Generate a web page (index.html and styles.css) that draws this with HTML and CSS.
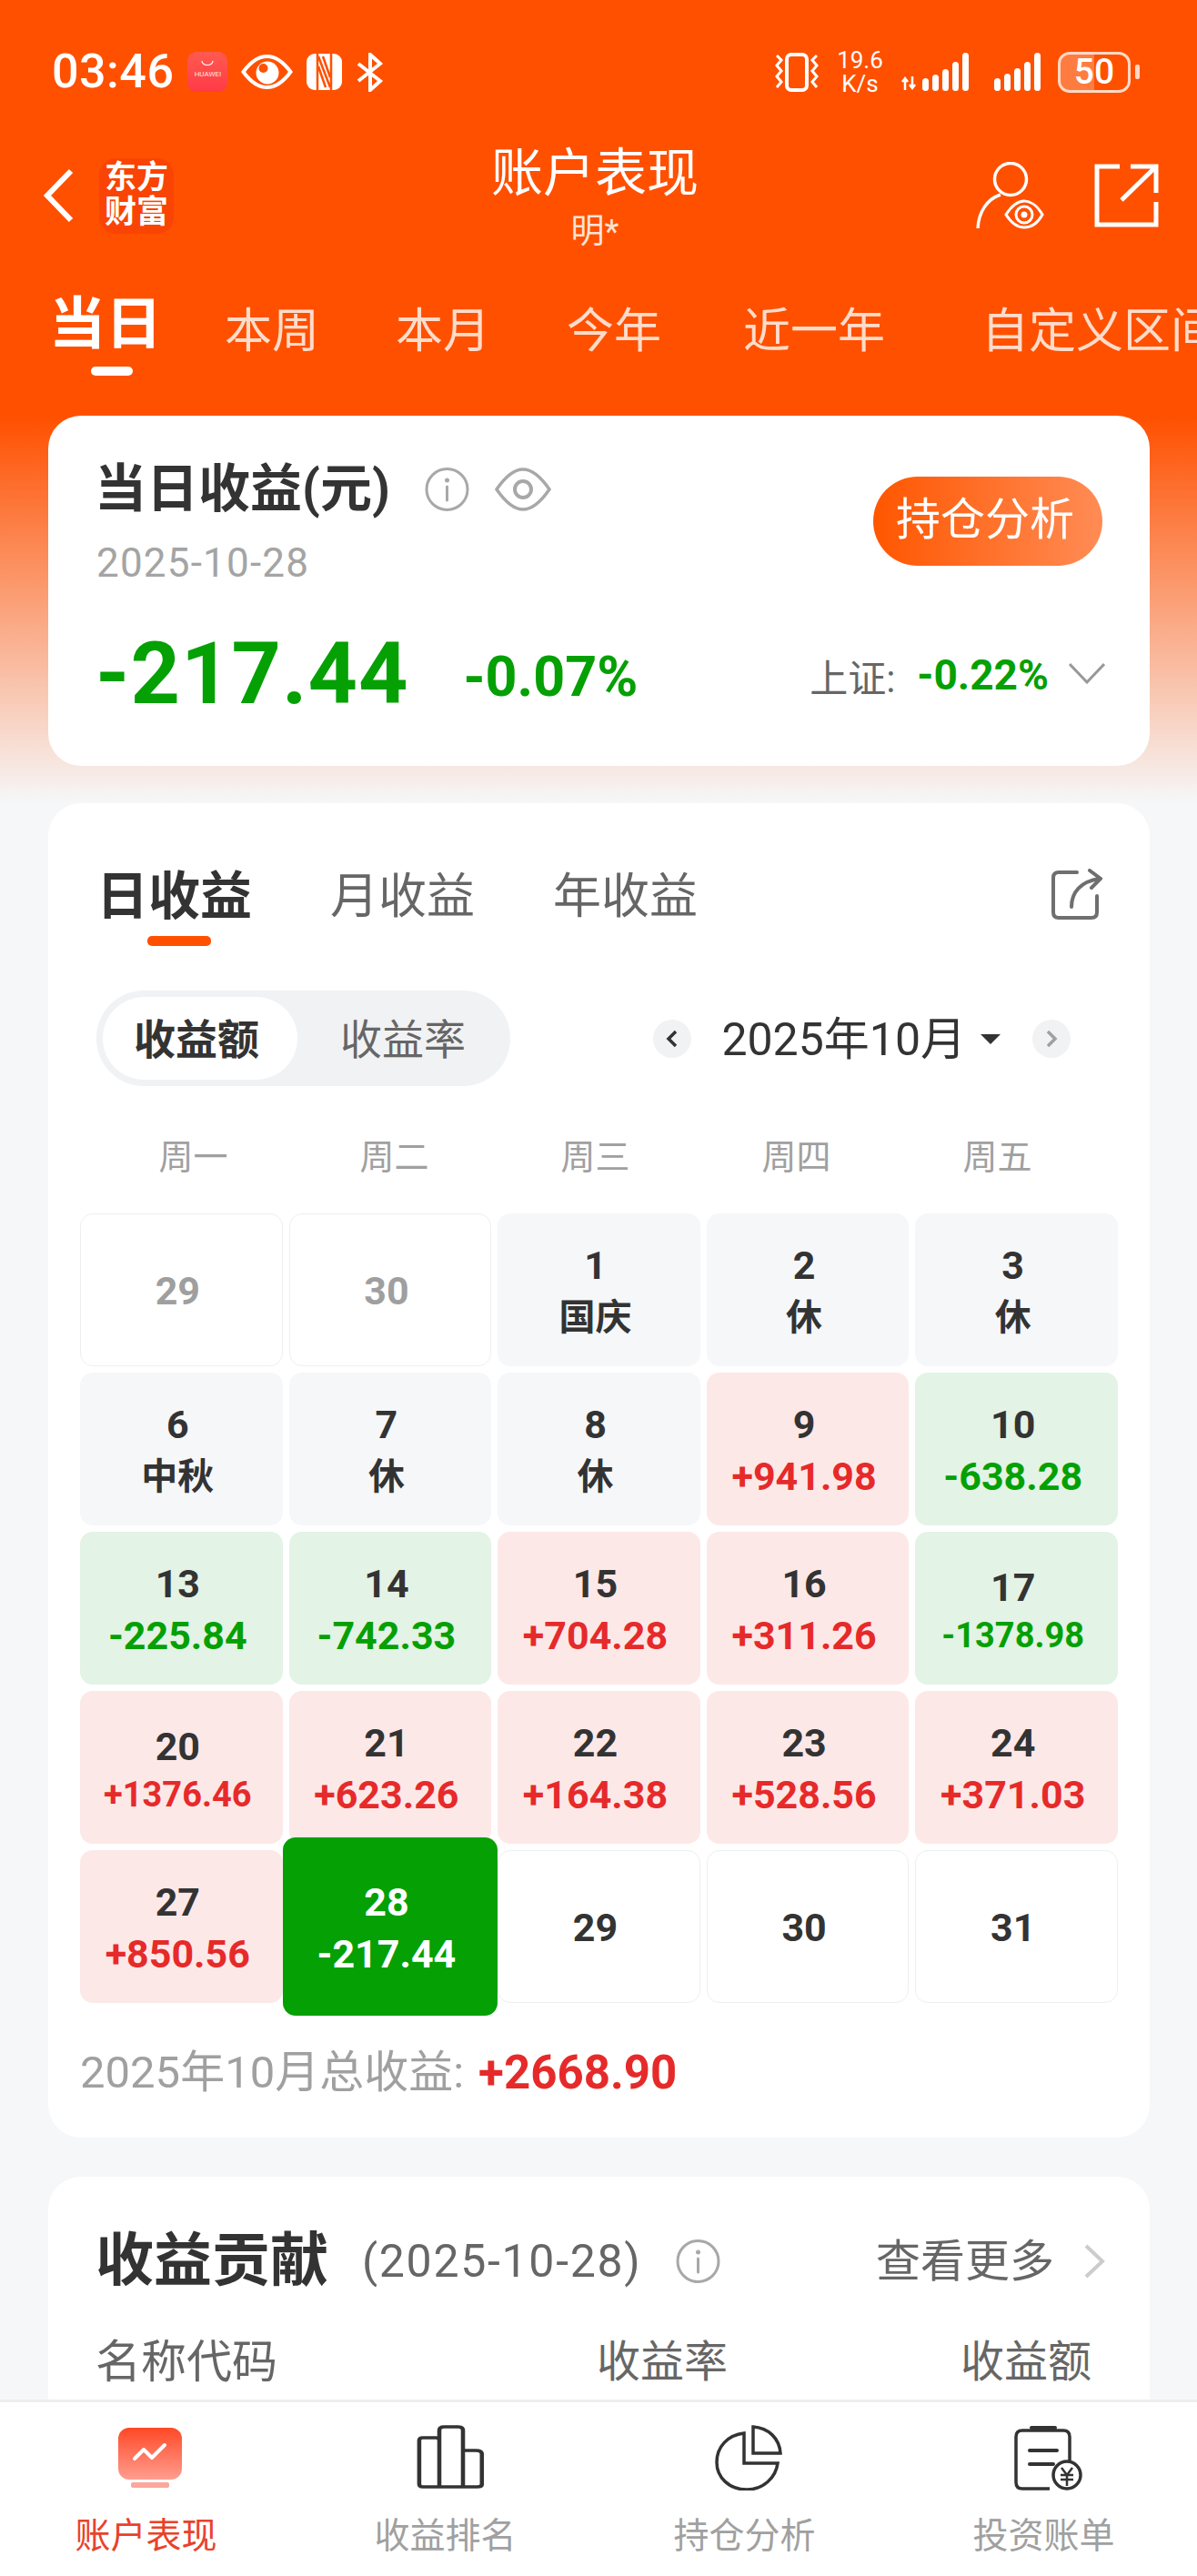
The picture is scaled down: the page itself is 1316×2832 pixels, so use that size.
FILE: index.html
```html
<!DOCTYPE html>
<html lang="zh-CN">
	<head>
		<meta charset="utf-8">
		<meta name="viewport" content="width=device-width, initial-scale=1">
		<title>账户表现</title>
		<link rel="stylesheet" href="styles.css">
	</head>
	<body>
		<!-- top orange area -->
		<div class="top">
			<div class="status-bar">
				<div class="status-left">
					<span class="status-time">03:46</span>
					<div class="huawei-icon">
						<svg class="huawei-smile" viewBox="0 0 16 8"><path d="M1 1c1 7 13 7 14 0" fill="none" stroke="#fff" stroke-width="1.2"/></svg>
						<span class="huawei-text">HUAWEI</span>
					</div>
					<svg class="st-eye" viewBox="0 0 57 38"><path d="M2.5 19C12 6 20 2 28.500 2S45 6 54.500 19C45 32 37 36 28.500 36S12 32 2.500 19Z" fill="none" stroke="#fff" stroke-width="4"/><circle cx="29" cy="20" r="12.500" fill="#fff"/><circle cx="24.500" cy="15" r="5" fill="#ff5000"/></svg>
					<svg class="st-nfc" viewBox="0 0 39 40"><rect width="39" height="40" rx="9" fill="#fff"/><path d="M12 0V40M27 0V40M13 3L26 37M13 14L21 37M26 26L18 3" fill="none" stroke="#ff5000" stroke-width="2.500"/></svg>
					<svg class="st-bt" viewBox="0 0 31 43"><path d="M3 12L27 31L16 41V2L27 12L3 31" fill="none" stroke="#fff" stroke-width="4"/></svg>
				</div>
				<div class="status-right">
					<svg class="st-vibrate" viewBox="0 0 50 43"><rect x="14" y="2" width="22" height="39" rx="5" fill="none" stroke="#fff" stroke-width="4"/><path d="M3 3L8 8L3 14L8 20L3 26L8 32L3 38M47 3L42 8L47 14L42 20L47 26L42 32L47 38" fill="none" stroke="#fff" stroke-width="3"/></svg>
					<div class="st-speed"><span>19.6</span><span>K/s</span></div>
					<svg class="st-signal" viewBox="0 0 76 42"><path d="M5 41V28M2 32L5 28L8 32M13 26V39M10 35L13 39L16 35" fill="none" stroke="#fff" stroke-width="2.500"/><rect x="24" y="28" width="7" height="14" rx="3.500" fill="#fff"/><rect x="35" y="24" width="7" height="18" rx="3.500" fill="#fff"/><rect x="46" y="18" width="7" height="24" rx="3.500" fill="#fff"/><rect x="57" y="10" width="7" height="32" rx="3.500" fill="#fff"/><rect x="68" y="0" width="7" height="42" rx="3.500" fill="#fff"/></svg>
					<svg class="st-signal2" viewBox="0 0 52 42"><rect x="0" y="28" width="7" height="14" rx="3.500" fill="#fff"/><rect x="11" y="23" width="7" height="19" rx="3.500" fill="#fff"/><rect x="22" y="17" width="7" height="25" rx="3.500" fill="#fff"/><rect x="33" y="10" width="7" height="32" rx="3.500" fill="#fff"/><rect x="44" y="0" width="7" height="42" rx="3.500" fill="#fff"/></svg>
					<div class="battery">
						<div class="battery-body"><div class="battery-fill"></div><span class="battery-text">50</span></div>
						<div class="battery-tip"></div>
					</div>
				</div>
			</div>

			<div class="nav">
				<div class="nav-left">
					<svg class="nav-back" viewBox="0 0 33 60"><path d="M30 3L4 30L30 57" fill="none" stroke="#fff" stroke-width="6"/></svg>
					<div class="nav-logo"><span>东方</span><span>财富</span></div>
				</div>
				<div class="nav-title">
					<div class="nav-title-main">账户表现</div>
					<div class="nav-title-sub">明*</div>
				</div>
				<div class="nav-right">
					<svg class="nav-user" viewBox="0 0 75 74"><circle cx="38" cy="19" r="17.500" fill="none" stroke="#fff" stroke-width="3.500"/><path d="M27 36C12 41 3 55 2 73" fill="none" stroke="#fff" stroke-width="3.500"/><path d="M33 58C40 47 47 43 53 43S67 47 73 58C67 69 60 72 53 72S40 69 33 58Z" fill="none" stroke="#fff" stroke-width="3"/><circle cx="53" cy="58" r="9" fill="none" stroke="#fff" stroke-width="3"/><circle cx="53" cy="58" r="3.500" fill="#fff"/></svg>
					<svg class="nav-share" viewBox="0 0 71 70"><path d="M28 3H3V67H68V42" fill="none" stroke="#fff" stroke-width="5"/><path d="M30 40L67 4M40 3H68V32" fill="none" stroke="#fff" stroke-width="5"/></svg>
				</div>
			</div>

			<div class="tabs">
				<div class="tab tab-active">当日</div>
				<div class="tab">本周</div>
				<div class="tab">本月</div>
				<div class="tab">今年</div>
				<div class="tab tab-year">近一年</div>
				<div class="tab tab-custom">自定义区间</div>
			</div>

			<!-- summary card -->
			<div class="card card-summary">
				<div class="summary-head">
					<div>
						<div class="summary-title-row">
							<span class="summary-title">当日收益(元)</span>
							<svg class="icon-info" viewBox="0 0 49 48"><circle cx="24.500" cy="24" r="22.500" fill="none" stroke="#a8a8a8" stroke-width="3"/><circle cx="24.500" cy="14" r="2.500" fill="#a8a8a8"/><path d="M24.500 21V36" stroke="#a8a8a8" stroke-width="3" stroke-linecap="round"/></svg>
							<svg class="icon-eye" viewBox="0 0 62 48"><path d="M2 24C13 8 22 2 31 2S49 8 60 24C49 40 40 46 31 46S13 40 2 24Z" fill="none" stroke="#a8a8a8" stroke-width="3.500"/><circle cx="31" cy="24" r="9" fill="none" stroke="#a8a8a8" stroke-width="4"/></svg>
						</div>
						<div class="summary-date">2025-10-28</div>
					</div>
					<div class="summary-btn">持仓分析</div>
				</div>
				<div class="summary-values">
					<span class="summary-amount">-217.44</span>
					<span class="summary-pct">-0.07%</span>
					<div class="summary-index">
						<span class="summary-index-name">上证:</span>
						<span class="summary-index-val">-0.22%</span>
						<svg class="icon-down" viewBox="0 0 40 24"><path d="M1 2L20 22L39 2" fill="none" stroke="#999" stroke-width="3"/></svg>
					</div>
				</div>
			</div>
		</div>
		<!-- .top orange area -->

		<!-- calendar card -->
		<div class="card card-calendar">
			<div class="cal-tabs">
				<div class="cal-tab cal-tab-active">日收益</div>
				<div class="cal-tab">月收益</div>
				<div class="cal-tab">年收益</div>
				<svg class="cal-share" viewBox="0 0 56 56"><path d="M28 4H8Q2 4 2 10V48Q2 54 8 54H44Q50 54 50 48V30" fill="none" stroke="#6f6f6f" stroke-width="4" stroke-linecap="round"/><path d="M22 42C22 26 32 14 53 11M42 2L54 11L44 21" fill="none" stroke="#6f6f6f" stroke-width="4" stroke-linecap="round"/></svg>
			</div>

			<div class="cal-controls">
				<div class="segment">
					<div class="segment-item segment-active">收益额</div>
					<div class="segment-item">收益率</div>
				</div>
				<div class="month-picker">
					<div class="month-arrow"><svg viewBox="0 0 42 42"><path d="M25 13L17 21L25 29" fill="none" stroke="#333" stroke-width="3.500"/></svg></div>
					<span class="month-text">2025年10月</span>
					<span class="month-caret"></span>
					<div class="month-arrow"><svg viewBox="0 0 42 42"><path d="M17 13L25 21L17 29" fill="none" stroke="#a0a0a0" stroke-width="3.500"/></svg></div>
				</div>
			</div>

			<div class="weekdays">
				<div>周一</div>
				<div>周二</div>
				<div>周三</div>
				<div>周四</div>
				<div>周五</div>
			</div>

			<div class="cal-grid">
				<div class="day day-out"><div class="day-num">29</div></div>
				<div class="day day-out"><div class="day-num">30</div></div>
				<div class="day day-off"><div class="day-num">1</div><div class="day-note">国庆</div></div>
				<div class="day day-off"><div class="day-num">2</div><div class="day-note">休</div></div>
				<div class="day day-off"><div class="day-num">3</div><div class="day-note">休</div></div>

				<div class="day day-off"><div class="day-num">6</div><div class="day-note">中秋</div></div>
				<div class="day day-off"><div class="day-num">7</div><div class="day-note">休</div></div>
				<div class="day day-off"><div class="day-num">8</div><div class="day-note">休</div></div>
				<div class="day day-up"><div class="day-num">9</div><div class="day-val">+941.98</div></div>
				<div class="day day-down"><div class="day-num">10</div><div class="day-val">-638.28</div></div>

				<div class="day day-down"><div class="day-num">13</div><div class="day-val">-225.84</div></div>
				<div class="day day-down"><div class="day-num">14</div><div class="day-val">-742.33</div></div>
				<div class="day day-up"><div class="day-num">15</div><div class="day-val">+704.28</div></div>
				<div class="day day-up"><div class="day-num">16</div><div class="day-val">+311.26</div></div>
				<div class="day day-down"><div class="day-num">17</div><div class="day-val day-val-long">-1378.98</div></div>

				<div class="day day-up"><div class="day-num">20</div><div class="day-val day-val-long">+1376.46</div></div>
				<div class="day day-up"><div class="day-num">21</div><div class="day-val">+623.26</div></div>
				<div class="day day-up"><div class="day-num">22</div><div class="day-val">+164.38</div></div>
				<div class="day day-up"><div class="day-num">23</div><div class="day-val">+528.56</div></div>
				<div class="day day-up"><div class="day-num">24</div><div class="day-val">+371.03</div></div>

				<div class="day day-up"><div class="day-num">27</div><div class="day-val">+850.56</div></div>
				<div class="day day-today"><div class="day-num">28</div><div class="day-val">-217.44</div></div>
				<div class="day day-future"><div class="day-num">29</div></div>
				<div class="day day-future"><div class="day-num">30</div></div>
				<div class="day day-future"><div class="day-num">31</div></div>
			</div>

			<div class="cal-total">
				<span class="cal-total-label">2025年10月总收益:</span>
				<span class="cal-total-val">+2668.90</span>
			</div>
		</div>
		<!-- .calendar card -->

		<!-- contribution card -->
		<div class="card card-contrib">
			<div class="contrib-head">
				<span class="contrib-title">收益贡献</span>
				<span class="contrib-date">(2025-10-28)</span>
				<svg class="icon-info" viewBox="0 0 49 48"><circle cx="24.500" cy="24" r="22.500" fill="none" stroke="#a8a8a8" stroke-width="3"/><circle cx="24.500" cy="14" r="2.500" fill="#a8a8a8"/><path d="M24.500 21V36" stroke="#a8a8a8" stroke-width="3" stroke-linecap="round"/></svg>
				<span class="contrib-more">查看更多</span>
				<svg class="icon-right" viewBox="0 0 23 38"><path d="M2 2L20 19L2 36" fill="none" stroke="#ccc" stroke-width="4"/></svg>
			</div>
			<div class="contrib-cols">
				<span class="contrib-col-name">名称代码</span>
				<span>收益率</span>
				<span class="contrib-col-amt">收益额</span>
			</div>
		</div>

		<!-- bottom bar -->
		<div class="bottom-bar">
			<div class="bottom-item bottom-active">
				<svg class="bottom-icon" viewBox="0 0 76 72">
					<defs><linearGradient id="tabRed" x1="0" y1="0" x2="0" y2="1"><stop offset="0" stop-color="#ff4826"/><stop offset="1" stop-color="#ff9e90"/></linearGradient></defs>
					<rect x="3" y="3" width="70" height="57" rx="12" fill="url(#tabRed)"/>
					<rect x="17" y="63" width="42" height="6" rx="2" fill="#fba79c"/>
					<path d="M21 37L31 27L40 36L54 22" fill="none" stroke="#fff" stroke-width="4" stroke-linecap="round" stroke-linejoin="round"/>
				</svg>
				<span>账户表现</span>
			</div>
			<div class="bottom-item">
				<svg class="bottom-icon" viewBox="0 0 76 72"><path d="M3 17Q3 14 6 14H17Q20 14 20 17V68H6Q3 68 3 65ZM20 6Q20 2 24 2H36Q40 2 40 6V68H20ZM40 28H51Q56 28 56 32V65Q56 68 52 68H40Z" transform="translate(1 0) scale(1.300 1)" fill="none" stroke="#333" stroke-width="3.500"/></svg>
				<span>收益排名</span>
			</div>
			<div class="bottom-item">
				<svg class="bottom-icon" viewBox="0 0 76 72"><path d="M33 9C15 11 3 24 3 41C3 58 17 71 36 71C54 71 68 58 70 42H33Z" fill="none" stroke="#333" stroke-width="3.500"/><path d="M43 2V31H73C72 15 60 3 43 2Z" fill="none" stroke="#333" stroke-width="3.500"/></svg>
				<span>持仓分析</span>
			</div>
			<div class="bottom-item">
				<svg class="bottom-icon" viewBox="0 0 76 72"><path d="M40 70H10Q3 70 3 63V13Q3 6 10 6H55Q62 6 62 13V42" fill="none" stroke="#333" stroke-width="3.500"/><path d="M20 3H46" stroke="#333" stroke-width="4" stroke-linecap="round"/><path d="M18 28H48M18 43H44" stroke="#333" stroke-width="4" stroke-linecap="round"/><circle cx="59" cy="55" r="15" fill="#fff" stroke="#333" stroke-width="3.500"/><path d="M53 47L59 55L65 47M52 55H66M52 60H66M59 55V67" fill="none" stroke="#333" stroke-width="2.500"/></svg>
				<span>投资账单</span>
			</div>
		</div>
		<!-- .bottom bar -->
	</body>
</html>
```

FILE: styles.css
```css
html, body {
	margin: 0;
	padding: 0;
}
body {
	position: relative;
	width: 1316px;
	height: 2832px;
	overflow: hidden;
	background-color: #f6f7f9;
	color: #333;
	font-family: "Roboto", "Noto Sans CJK SC", sans-serif;
}
svg {
	display: block;
	flex: none;
}

/* top */
.top {
	height: 883px;
	box-sizing: border-box;
	overflow: hidden;
	background: linear-gradient(#ff5000 0, #ff5000 458px, #f6f7f9 883px);
}

.status-bar {
	display: flex;
	justify-content: space-between;
	align-items: center;
	height: 158px;
	padding: 0 63px 0 57px;
	color: #fff;
}
.status-left, .status-right {
	display: flex;
	align-items: center;
}
.status-left {
	gap: 15px;
}
.status-right {
	gap: 18px;
}
.status-time {
	font-size: 52px;
	font-weight: 500;
	line-height: 60px;
	letter-spacing: 0.5px;
}
.huawei-icon {
	width: 44px;
	height: 44px;
	border-radius: 10px;
	background: linear-gradient(#ff5a50, #ff3a46);
	display: flex;
	flex-direction: column;
	align-items: center;
}
.huawei-smile {
	width: 14px;
	height: 7px;
	margin-top: 9px;
}
.huawei-text {
	font-size: 8px;
	line-height: 14px;
	margin-top: 2px;
	color: #ffe4e4;
}
.st-eye {
	width: 57px;
	height: 38px;
}
.st-nfc {
	width: 39px;
	height: 40px;
}
.st-bt {
	width: 31px;
	height: 43px;
}
.st-vibrate {
	width: 50px;
	height: 43px;
}
.st-speed {
	display: flex;
	flex-direction: column;
	align-items: center;
	width: 53px;
	font-size: 26px;
	line-height: 26px;
}
.st-signal {
	width: 76px;
	height: 42px;
}
.st-signal2 {
	width: 52px;
	height: 42px;
	margin-left: 9px;
}
.battery {
	display: flex;
	align-items: center;
	gap: 5px;
}
.battery-body {
	position: relative;
	width: 80px;
	height: 45px;
	box-sizing: border-box;
	border: 3px solid #ffd9c6;
	border-radius: 13px;
	overflow: hidden;
	text-align: center;
}
.battery-fill {
	position: absolute;
	left: 0;
	top: 0;
	bottom: 0;
	width: 50%;
	background-color: rgba(255, 255, 255, 0.25);
}
.battery-text {
	position: relative;
	font-size: 39px;
	font-weight: 500;
	line-height: 39px;
}
.battery-tip {
	width: 5px;
	height: 16px;
	border-radius: 2px;
	background-color: #ffd9c6;
}

.nav {
	display: grid;
	grid-template-columns: 1fr auto 1fr;
	height: 122px;
	padding-right: 8px;
	color: #fff;
}
.nav-left, .nav-right {
	display: flex;
	align-items: center;
	padding-bottom: 8px;
}
.nav-left {
	gap: 28px;
	padding-left: 48px;
}
.nav-right {
	justify-content: flex-end;
	gap: 55px;
	padding-right: 34px;
}
.nav-back {
	width: 33px;
	height: 60px;
}
.nav-logo {
	display: flex;
	flex-direction: column;
	align-items: center;
	justify-content: center;
	width: 82px;
	height: 83px;
	border-radius: 18px;
	background-color: #f94405;
	font-size: 35px;
	font-weight: 700;
	line-height: 38px;
}
.nav-title {
	text-align: center;
}
.nav-title-main {
	font-size: 57px;
	line-height: 62px;
	padding-top: 2px;
}
.nav-title-sub {
	margin-top: 8px;
	font-size: 37px;
	line-height: 50px;
	color: #ffe3d5;
}
.nav-user {
	width: 75px;
	height: 74px;
}
.nav-share {
	width: 71px;
	height: 70px;
}

.tabs {
	display: flex;
	align-items: flex-start;
	gap: 84px;
	margin-top: 42px;
	padding-left: 54px;
	height: 94px;
	margin-bottom: 41px;
	white-space: nowrap;
}
.tab {
	margin-top: 8px;
	font-size: 52px;
	line-height: 70px;
	color: #ffdcca;
}
.tab-active {
	margin-top: 0;
	margin-right: -15px;
	font-size: 62px;
	font-weight: 700;
	color: #fff;
}
.tab-active::after {
	content: "";
	display: block;
	width: 46px;
	height: 10px;
	margin: 11px 0 0 46px;
	border-radius: 5px;
	background-color: #fff;
}
.tab-year {
	margin-left: 6px;
}
.tab-custom {
	margin-left: 22px;
}

/* cards */
.card {
	width: 1211px;
	margin-left: 53px;
	box-sizing: border-box;
	border-radius: 36px;
	background-color: #fff;
}

.card-summary {
	height: 385px;
	padding: 46px 49px 0 51px;
}
.summary-head {
	display: flex;
	justify-content: space-between;
	align-items: flex-start;
}
.summary-title-row {
	display: flex;
	align-items: center;
	height: 70px;
}
.summary-title {
	font-size: 57px;
	font-weight: 700;
	line-height: 70px;
}
.icon-info {
	width: 49px;
	height: 48px;
}
.summary-title-row .icon-info {
	margin-left: 38px;
}
.icon-eye {
	width: 62px;
	height: 48px;
	margin-left: 28px;
}
.summary-date {
	margin-top: 21px;
	margin-left: 2px;
	font-size: 44px;
	line-height: 50px;
	letter-spacing: 1.2px;
	color: #a4a4a4;
}
.summary-btn {
	margin: 21px 3px 0 0;
	width: 252px;
	height: 98px;
	box-sizing: border-box;
	padding-right: 6px;
	border-radius: 49px;
	background: linear-gradient(90deg, #ff5600, #ff8c55);
	color: #fff;
	font-size: 49px;
	line-height: 96px;
	text-align: center;
}
.summary-values {
	display: flex;
	align-items: center;
	height: 100px;
	margin-top: 47px;
}
.summary-amount {
	margin-left: 1px;
	font-size: 95px;
	font-weight: 700;
	line-height: 100px;
	letter-spacing: 1px;
	color: #04a004;
}
.summary-pct {
	margin: 5px 0 0 60px;
	font-size: 61px;
	font-weight: 700;
	color: #04a004;
}
.summary-index {
	display: flex;
	align-items: center;
	margin: 2px 0 0 auto;
}
.summary-index-name {
	font-size: 42px;
	color: #666;
}
.summary-index-val {
	margin-left: 24px;
	font-size: 46px;
	font-weight: 700;
	color: #04a004;
}
.icon-down {
	width: 40px;
	height: 24px;
	margin: -4px 0 0 22px;
}

/* calendar */
.card-calendar {
	height: 1467px;
	padding-top: 66px;
}
.cal-tabs {
	display: flex;
	align-items: flex-start;
	gap: 86px;
	height: 91px;
	padding: 0 52px 0 53px;
}
.cal-tab {
	font-size: 53px;
	line-height: 70px;
	padding-top: 2px;
	color: #666;
}
.cal-tab-active {
	font-size: 57px;
	font-weight: 700;
	color: #333;
}
.cal-tab-active::after {
	content: "";
	display: block;
	width: 70px;
	height: 11px;
	margin: 8px 0 0 56px;
	border-radius: 5px;
	background-color: #ff5000;
}
.cal-share {
	width: 56px;
	height: 56px;
	margin: 6px 0 0 auto;
}
.cal-controls {
	display: flex;
	align-items: center;
	justify-content: space-between;
	margin-top: 49px;
	padding: 0 87px 0 53px;
}
.segment {
	display: flex;
	align-items: center;
	width: 455px;
	height: 105px;
	box-sizing: border-box;
	padding: 0 7px;
	border-radius: 52px;
	background-color: #f1f2f4;
}
.segment-item {
	box-sizing: border-box;
	height: 91px;
	padding-top: 3px;
	font-size: 46px;
	line-height: 88px;
	color: #666;
	width: 214px;
	text-align: center;
}
.segment-active {
	padding-right: 8px;
	border-radius: 46px;
	background-color: #fff;
	color: #333;
	font-weight: 700;
}
.segment-active + .segment-item {
	margin-left: 9px;
}
.month-picker {
	display: flex;
	align-items: center;
}
.month-arrow {
	width: 42px;
	height: 42px;
	border-radius: 50%;
	background-color: #f1f2f4;
}
.month-text {
	margin-left: 33px;
	padding-top: 2px;
	font-size: 50px;
	line-height: 60px;
}
.month-caret {
	width: 0;
	height: 0;
	margin: 2px 35px 0 16px;
	border-left: 11px solid transparent;
	border-right: 11px solid transparent;
	border-top: 11px solid #333;
}
.weekdays {
	display: grid;
	grid-template-columns: repeat(5, 221px);
	margin: 53px 0 0 49px;
	font-size: 38px;
	line-height: 50px;
	color: #a0a0a0;
	text-align: center;
}
.cal-grid {
	display: grid;
	grid-template-columns: repeat(5, 1fr);
	grid-auto-rows: 168px;
	gap: 7px;
	margin: 37px 35px 0;
}
.day {
	display: flex;
	flex-direction: column;
	justify-content: center;
	align-items: center;
	box-sizing: border-box;
	padding: 3px 8px 0 0;
	border-radius: 14px;
}
.day-num {
	font-size: 43px;
	font-weight: 700;
	line-height: 57px;
}
.day-note {
	font-size: 40px;
	font-weight: 700;
	line-height: 57px;
}
.day-val {
	font-size: 43px;
	font-weight: 700;
	line-height: 57px;
}
.day-val-long {
	font-size: 38px;
	line-height: 49px;
}
.day-out, .day-future {
	border: 1px solid #eeeff1;
}
.day-out .day-num {
	color: #9f9f9f;
}
.day-off {
	background-color: #f6f7f9;
}
.day-up {
	background-color: #fde8e8;
}
.day-up .day-val {
	color: #e62a2a;
}
.day-down {
	background-color: #e3f3e5;
}
.day-down .day-val {
	color: #04a004;
}
.day-today {
	position: relative;
	margin: -14px -7px;
	background-color: #04a004;
	color: #fff;
}
.cal-total {
	display: flex;
	align-items: center;
	gap: 16px;
	margin: 47px 0 0 35px;
	line-height: 60px;
}
.cal-total-label {
	font-size: 49px;
	color: #a0a0a0;
}
.cal-total-val {
	font-size: 51px;
	font-weight: 700;
	color: #e62a2a;
}

/* contribution */
.card-contrib {
	height: 400px;
	margin-top: 43px;
	padding: 58px 49px 0 52px;
}
.contrib-head {
	display: flex;
	align-items: center;
	height: 70px;
}
.contrib-title {
	font-size: 64px;
	font-weight: 700;
	line-height: 70px;
}
.contrib-date {
	margin-left: 37px;
	font-size: 50px;
	letter-spacing: 1.7px;
	color: #666;
}
.contrib-head .icon-info {
	margin-left: 38px;
}
.contrib-more {
	margin: 0 0 10px auto;
	font-size: 49px;
	color: #666;
}
.icon-right {
	width: 23px;
	height: 38px;
	margin-left: 33px;
}
.contrib-cols {
	display: flex;
	margin-top: 46px;
	font-size: 48px;
	line-height: 60px;
	color: #666;
}
.contrib-col-name {
	font-size: 50px;
	width: 551px;
}
.contrib-col-amt {
	margin: 0 15px 0 auto;
}

/* bottom */
.bottom-bar {
	position: absolute;
	left: 0;
	right: 0;
	bottom: 0;
	display: grid;
	grid-template-columns: repeat(4, 1fr);
	height: 194px;
	box-sizing: border-box;
	border-top: 3px solid #eeeeee;
	background-color: #fff;
}
.bottom-item {
	display: flex;
	flex-direction: column;
	align-items: center;
	padding: 25px 8px 0 0;
	font-size: 39px;
	line-height: 50px;
	color: #a0a0a0;
}
.bottom-active {
	color: #e8432a;
}
.bottom-icon {
	width: 76px;
	height: 72px;
	margin: 0 0 25px 8px;
}
```
